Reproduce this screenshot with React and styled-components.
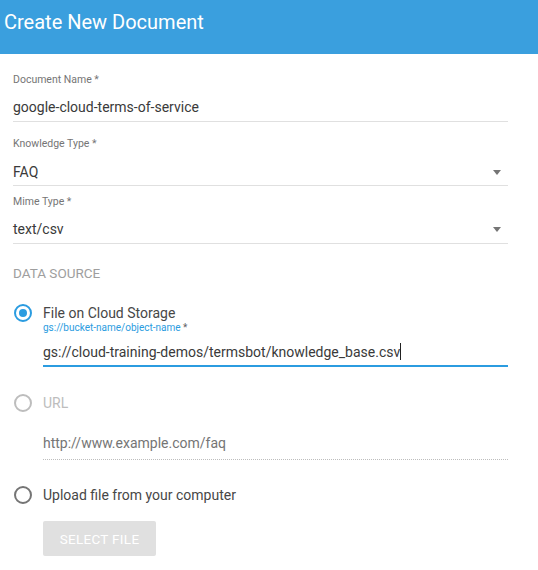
import React from "react";
import styled, { createGlobalStyle } from "styled-components";

const Global = createGlobalStyle`
  html, body { margin: 0; padding: 0; background: #ffffff; }
  body { font-family: Roboto, "Noto Sans", "Liberation Sans", sans-serif; }
  * { box-sizing: border-box; }
`;

const Page = styled.div`
  width: 538px;
  height: 570px;
  background: #fff;
  overflow: hidden;
`;

const Header = styled.header`
  height: 54px;
  background: #3a9fde;
  padding: 9px 0 0 4px;
`;

const Title = styled.h1`
  margin: 0;
  font-size: 20px;
  line-height: 26px;
  font-weight: 400;
  color: #ffffff;
`;

const Form = styled.div`
  padding: 20px 30px 0 13px;
  display: flex;
  flex-direction: column;
`;

const Field = styled.div`
  margin-top: ${(p) => p.$top || 0}px;
  display: flex;
  flex-direction: column;
`;

const Label = styled.div`
  font-size: 10.5px;
  line-height: 12px;
  color: #757575;
`;

const ValueRow = styled.div`
  margin-top: ${(p) => p.$gap}px;
  display: flex;
  align-items: center;
  justify-content: space-between;
  padding-bottom: ${(p) => p.$pad}px;
  border-bottom: 1px solid #e0e0e0;
`;

const Value = styled.div`
  font-size: 14px;
  line-height: 20px;
  color: #3a3a3a;
`;

const Arrow = styled.span`
  width: 0;
  height: 0;
  margin-right: 7px;
  border-left: 4px solid transparent;
  border-right: 4px solid transparent;
  border-top: 5px solid #757575;
`;

const Section = styled.div`
  margin-top: 22px;
  font-size: 13.5px;
  line-height: 14px;
  color: #9e9e9e;
`;

const Option = styled.div`
  display: flex;
  align-items: flex-start;
  margin-top: ${(p) => p.$top}px;
`;

const Radio = styled.span`
  flex: none;
  width: 18px;
  height: 18px;
  margin: 1px 11px 0 1px;
  border-radius: 50%;
  border: 2px solid ${(p) => p.$color};
  display: flex;
  align-items: center;
  justify-content: center;
  &::after {
    content: "";
    width: 8px;
    height: 8px;
    border-radius: 50%;
    background: ${(p) => (p.$checked ? p.$color : "transparent")};
  }
`;

const OptionBody = styled.div`
  flex: 1;
  display: flex;
  flex-direction: column;
`;

const OptionLabel = styled.div`
  font-size: 14px;
  line-height: 20px;
  color: ${(p) => (p.$disabled ? "#bdbdbd" : "#474747")};
`;

const Hint = styled.div`
  font-size: 10px;
  line-height: 10px;
  color: #2b9ce0;
  span { color: #616161; }
`;

const Input = styled.div`
  margin-top: ${(p) => p.$top}px;
  margin-left: ${(p) => p.$indent || 0}px;
  font-size: 14px;
  line-height: 20px;
  color: ${(p) => (p.$placeholder ? "#757575" : "#3a3a3a")};
  padding-bottom: ${(p) => p.$pad}px;
  border-bottom: ${(p) => p.$line};
`;

const Caret = styled.span`
  display: inline-block;
  width: 1px;
  height: 17px;
  background: #212121;
  vertical-align: -3px;
`;

const Button = styled.div`
  margin: 16px 0 0 30px;
  width: 113px;
  height: 35px;
  background: #e0e0e0;
  border-radius: 2px;
  color: #ffffff;
  font-size: 13.5px;
  letter-spacing: 0.3px;
  display: flex;
  align-items: center;
  justify-content: center;
  text-transform: uppercase;
`;

export default function App() {
  return (
    <Page>
      <Global />
      <Header>
        <Title>Create New Document</Title>
      </Header>
      <Form>
        <Field>
          <Label>Document Name *</Label>
          <ValueRow $gap={11} $pad={4}>
            <Value>google-cloud-terms-of-service</Value>
          </ValueRow>
        </Field>
        <Field $top={16}>
          <Label>Knowledge Type *</Label>
          <ValueRow $gap={12} $pad={3}>
            <Value>FAQ</Value>
            <Arrow />
          </ValueRow>
        </Field>
        <Field $top={10}>
          <Label>Mime Type *</Label>
          <ValueRow $gap={11} $pad={4}>
            <Value>text/csv</Value>
            <Arrow />
          </ValueRow>
        </Field>
        <Section>DATA SOURCE</Section>
        <Option $top={23}>
          <Radio $color="#2b9ce0" $checked />
          <OptionBody>
            <OptionLabel>File on Cloud Storage</OptionLabel>
            <Hint>
              gs://bucket-name/object-name <span>*</span>
            </Hint>
            <Input $top={9} $pad={3} $line="2px solid #2b9ce0">
              gs://cloud-training-demos/termsbot/knowledge_base.csv<Caret />
            </Input>
          </OptionBody>
        </Option>
        <Option $top={26}>
          <Radio $color="#bdbdbd" />
          <OptionBody>
            <OptionLabel $disabled>URL</OptionLabel>
          </OptionBody>
        </Option>
        <Input $top={20} $indent={30} $pad={6} $line="1px dotted #bdbdbd" $placeholder>
          http://www.example.com/faq
        </Input>
        <Option $top={25}>
          <Radio $color="#757575" />
          <OptionBody>
            <OptionLabel>Upload file from your computer</OptionLabel>
          </OptionBody>
        </Option>
        <Button>Select file</Button>
      </Form>
    </Page>
  );
}
